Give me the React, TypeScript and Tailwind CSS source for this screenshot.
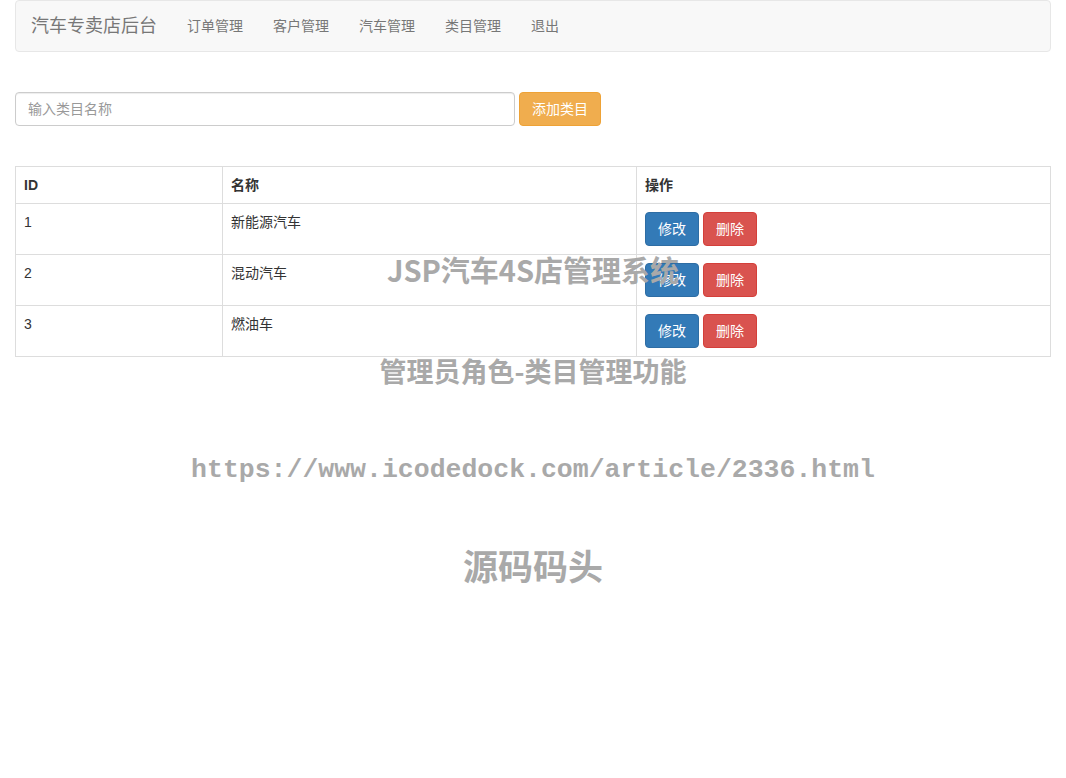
import React from 'react';

const navLinks = ['订单管理', '客户管理', '汽车管理', '类目管理', '退出'];

const categories = [
  { id: 1, name: '新能源汽车' },
  { id: 2, name: '混动汽车' },
  { id: 3, name: '燃油车' },
];

const sans = "font-['Liberation_Sans','Noto_Sans_CJK_SC',sans-serif]";

export default function App() {
  return (
    <div className={`relative min-h-[778px] bg-white text-[14px] leading-[20px] text-[#333] ${sans}`}>
      <div className="px-[15px]">
        {/* Navbar */}
        <nav className="flex h-[52px] items-center rounded-[4px] border border-[#e7e7e7] bg-[#f8f8f8] px-[15px]">
          <span className="pr-[15px] text-[18px] leading-[20px] text-[#777]">汽车专卖店后台</span>
          <ul className="flex">
            {navLinks.map((l) => (
              <li key={l} className="px-[15px] text-[#777]">
                {l}
              </li>
            ))}
          </ul>
        </nav>

        {/* Add category form */}
        <div className="mt-[40px] flex items-center gap-[4px]">
          <input
            className="h-[34px] w-[500px] rounded-[4px] border border-[#ccc] px-[12px] text-[14px] shadow-[inset_0_1px_1px_rgba(0,0,0,0.075)] outline-none placeholder:text-[#999]"
            placeholder="输入类目名称"
          />
          <button className="h-[34px] rounded-[4px] border border-[#eea236] bg-[#f0ad4e] px-[12px] text-white">
            添加类目
          </button>
        </div>

        {/* Table */}
        <table className="mt-[40px] w-[1035px] table-fixed border-collapse border border-[#ddd]">
          <colgroup>
            <col className="w-[207px]" />
            <col className="w-[414px]" />
            <col className="w-[414px]" />
          </colgroup>
          <thead>
            <tr>
              <th className="border border-[#ddd] p-[8px] text-left font-bold">ID</th>
              <th className="border border-[#ddd] p-[8px] text-left font-bold">名称</th>
              <th className="border border-[#ddd] p-[8px] text-left font-bold">操作</th>
            </tr>
          </thead>
          <tbody>
            {categories.map((c) => (
              <tr key={c.id}>
                <td className="border border-[#ddd] p-[8px] align-top">{c.id}</td>
                <td className="border border-[#ddd] p-[8px] align-top">{c.name}</td>
                <td className="border border-[#ddd] p-[8px] align-top">
                  <div className="flex gap-[4px]">
                    <button className="h-[34px] rounded-[4px] border border-[#2e6da4] bg-[#337ab7] px-[12px] text-white">
                      修改
                    </button>
                    <button className="h-[34px] rounded-[4px] border border-[#d43f3a] bg-[#d9534f] px-[12px] text-white">
                      删除
                    </button>
                  </div>
                </td>
              </tr>
            ))}
          </tbody>
        </table>
      </div>

      {/* Watermark overlay */}
      <div className="pointer-events-none absolute inset-x-0 top-0 font-bold text-[#a9a9a9]">
        <div className="absolute left-0 right-0 top-[249px] text-center font-['Noto_Sans_CJK_SC',sans-serif] text-[29px] leading-[40px]">
          JSP汽车4S店管理系统
        </div>
        <div className="absolute left-0 right-0 top-[353px] text-center font-['Noto_Sans_CJK_SC',sans-serif] text-[27px] leading-[36px]">
          管理员角色-类目管理功能
        </div>
        <div className="absolute left-0 right-0 top-[452px] text-center font-['Liberation_Mono',monospace] text-[26.5px] leading-[36px] font-bold">
          https://www.icodedock.com/article/2336.html
        </div>
        <div className="absolute left-0 right-0 top-[543px] text-center font-['Noto_Sans_CJK_SC',sans-serif] text-[35px] leading-[44px]">
          源码码头
        </div>
      </div>
    </div>
  );
}
